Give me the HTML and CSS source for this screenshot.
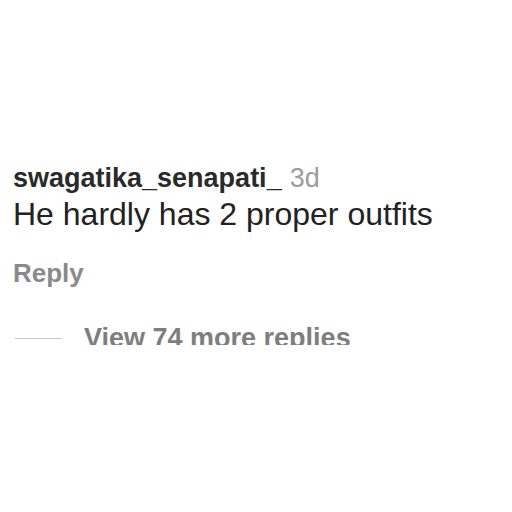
FILE: index.html
```html
<!DOCTYPE html>
<html lang="en">
<head>
  <meta charset="UTF-8">
  <title>Comment</title>
  <link rel="stylesheet" href="styles.css">
</head>
<body>
  <main class="comment">
    <div class="comment-head">
      <span class="username">swagatika_senapati_</span>
      <span class="time">3d</span>
    </div>
    <p class="comment-text">He hardly has 2 proper outfits</p>
    <button class="reply">Reply</button>
    <div class="more-replies">
      <span class="rule"></span>
      <span class="more-text">View 74 more replies</span>
    </div>
  </main>
</body>
</html>
```
FILE: styles.css
```css
body {
  margin: 0;
  background-color: #fff;
  font-family: "Liberation Sans", Arial, sans-serif;
}

.comment {
  padding: 163px 0 0 13px;
}

.comment-head {
  display: flex;
  align-items: baseline;
  gap: 8px;
  font-size: 27px;
  line-height: 30px;
}

.username {
  color: #2a2a2a;
  font-weight: bold;
}

.time {
  color: #9c9c9c;
}

.comment-text {
  margin: 3px 0 0;
  color: #222;
  font-size: 32px;
  line-height: 36px;
}

.reply {
  display: block;
  margin-top: 26px;
  padding: 0;
  border: none;
  background: none;
  color: #8a8a8a;
  font-family: inherit;
  font-size: 26px;
  font-weight: bold;
  line-height: 30px;
}

.more-replies {
  display: flex;
  align-items: flex-start;
  gap: 22px;
  margin-top: 35px;
  height: 22px;
  overflow: hidden;
}

.rule {
  width: 47px;
  height: 1px;
  margin: 15px 0 0 2px;
  background-color: #c8c8c8;
}

.more-text {
  color: #7e7e7e;
  font-size: 27px;
  font-weight: bold;
  line-height: 30px;
}
```
